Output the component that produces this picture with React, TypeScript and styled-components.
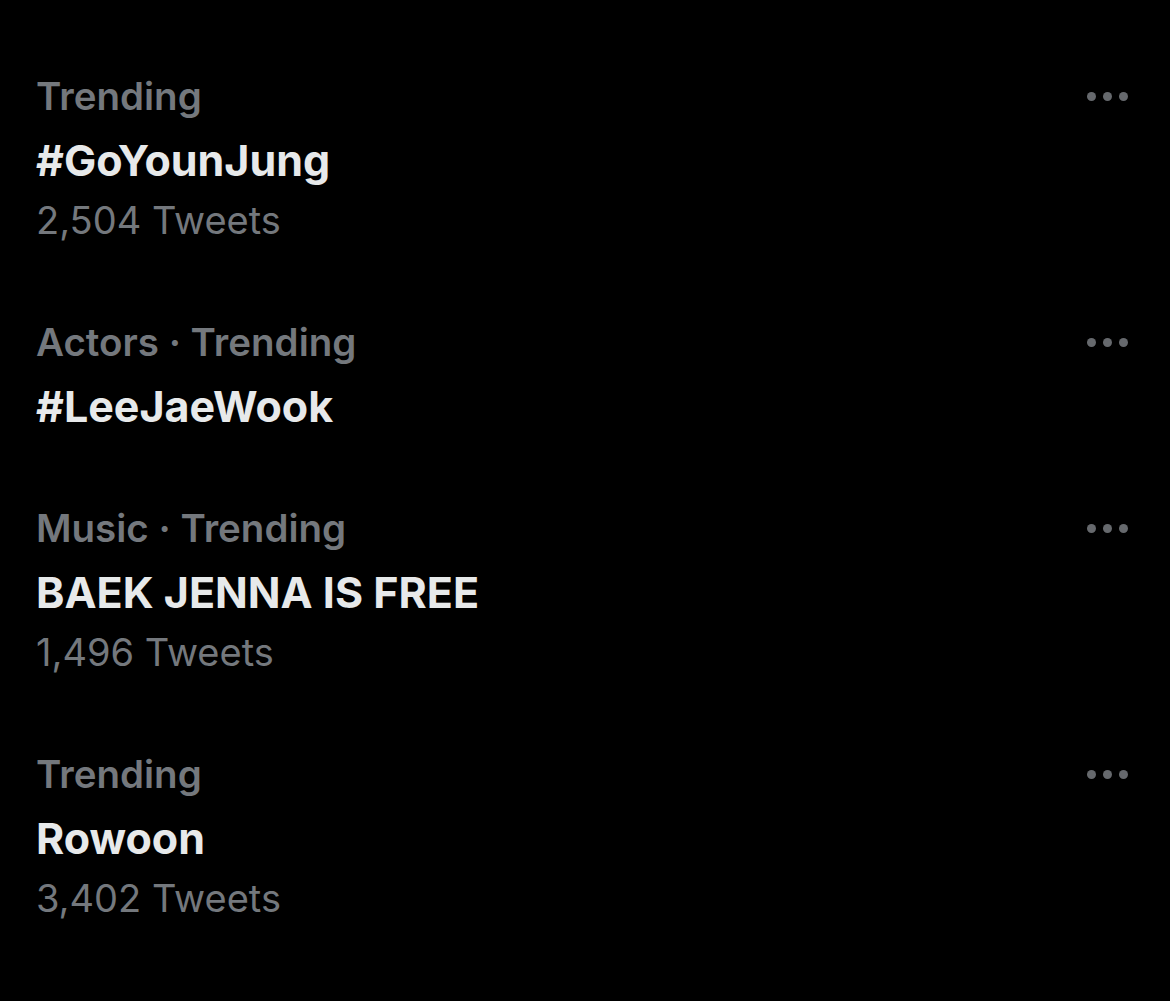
import React from "react";
import styled, { createGlobalStyle } from "styled-components";

interface ITrend {
  context: string;
  title: string;
  count?: string;
}

const trends: ITrend[] = [
  { context: "Trending", title: "#GoYounJung", count: "2,504 Tweets" },
  { context: "Actors · Trending", title: "#LeeJaeWook" },
  { context: "Music · Trending", title: "BAEK JENNA IS FREE", count: "1,496 Tweets" },
  { context: "Trending", title: "Rowoon", count: "3,402 Tweets" },
];

const App = () => {
  return (
    <>
      <GlobalStyle />
      <Page>
        {trends.map((t, i) => (
          <Row key={i}>
            <Content>
              <Context>{t.context}</Context>
              <Title>{t.title}</Title>
              {t.count ? <Count>{t.count}</Count> : null}
            </Content>
            <MoreButton aria-label="More">
              <Dot />
              <Dot />
              <Dot />
            </MoreButton>
          </Row>
        ))}
      </Page>
    </>
  );
};

const GlobalStyle = createGlobalStyle`
  html, body {
    margin: 0;
    padding: 0;
    background-color: #000;
  }
  body {
    font-family: Inter, "Noto Sans", "Liberation Sans", sans-serif;
    -webkit-font-smoothing: antialiased;
  }
`;

const Page = styled.div`
  width: 1170px;
  height: 1001px;
  background-color: #000;
  padding: 35px 42px 0 36px;
  box-sizing: border-box;
  display: flex;
  flex-direction: column;
`;

const Row = styled.div`
  display: flex;
  align-items: flex-start;
  justify-content: space-between;
  padding: 31px 0;
`;

const Content = styled.div`
  display: flex;
  flex-direction: column;
`;

const Context = styled.div`
  font-size: 38.5px;
  font-weight: 600;
  line-height: 61px;
  color: #74787d;
`;

const Title = styled.div`
  font-size: 43px;
  font-weight: 700;
  line-height: 64px;
  padding-top: 1px;
  margin-bottom: -2px;
  color: #e7e9ea;
`;

const Count = styled.div`
  font-size: 38px;
  font-weight: 400;
  line-height: 60px;
  color: #74787d;
`;

const MoreButton = styled.div`
  display: flex;
  align-items: center;
  gap: 7px;
  height: 61px;
`;

const Dot = styled.span`
  width: 9px;
  height: 9px;
  border-radius: 50%;
  background-color: #66696d;
`;

export default App;
